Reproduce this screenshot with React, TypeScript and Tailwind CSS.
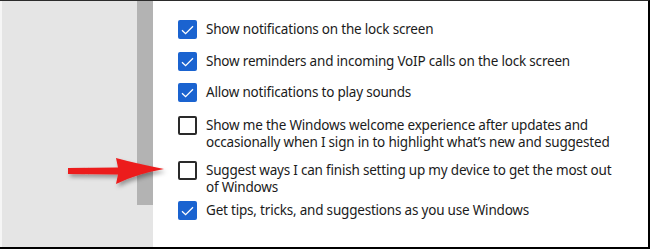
import React from 'react'

type Item = {
  lines: string[]
  checked: boolean
  mt: string
}

const items: Item[] = [
  { lines: ['Show notifications on the lock screen'], checked: true, mt: 'mt-0' },
  {
    lines: ['Show reminders and incoming VoIP calls on the lock screen'],
    checked: true,
    mt: 'mt-[13px]',
  },
  { lines: ['Allow notifications to play sounds'], checked: true, mt: 'mt-[12px]' },
  {
    lines: [
      'Show me the Windows welcome experience after updates and',
      'occasionally when I sign in to highlight what\u2019s new and suggested',
    ],
    checked: false,
    mt: 'mt-[14px]',
  },
  {
    lines: ['Suggest ways I can finish setting up my device to get the most out', 'of Windows'],
    checked: false,
    mt: 'mt-[10px]',
  },
  {
    lines: ['Get tips, tricks, and suggestions as you use Windows'],
    checked: true,
    mt: 'mt-[5px]',
  },
]

function Checkbox({ checked }: { checked: boolean }) {
  if (checked) {
    return (
      <div className="flex h-[19px] w-[19px] shrink-0 items-center justify-center rounded-[2px] bg-[#1a63d0]">
        <svg width="13" height="10" viewBox="0 0 13 10" fill="none">
          <path d="M1 5.2 L4.6 8.6 L12 1.2" stroke="white" strokeWidth="1.3" />
        </svg>
      </div>
    )
  }
  return (
    <div className="h-[19px] w-[19px] shrink-0 rounded-[2px] border-2 border-[#2a2a2a] bg-white" />
  )
}

function Arrow() {
  return (
    <svg
      className="absolute left-[64px] top-[152px]"
      width="110"
      height="38"
      viewBox="0 0 110 38"
    >
      <defs>
        <filter id="sh" x="-10%" y="-20%" width="130%" height="160%">
          <feDropShadow dx="2" dy="3" stdDeviation="2" floodColor="#000" floodOpacity="0.35" />
        </filter>
      </defs>
      <path
        d="M4 15 L54 14.5 L52 5 Q70 10 100 16 Q72 21 52 31 L54 21.5 L4 21 Z"
        fill="#ec1c1c"
        filter="url(#sh)"
      />
    </svg>
  )
}

export default function App() {
  return (
    <div className="relative flex h-[249px] w-[650px] border-t border-b-2 border-r-2 border-t-[#2b2b2b] border-b-black border-r-black bg-white font-['Noto_Sans',sans-serif]">
      <div className="w-[137px] border-l-2 border-l-[#f6f6f6] bg-[#e5e5e5]" />
      <div className="flex w-[16px] flex-col bg-[#e5e5e5]">
        <div className="h-[204px] bg-[#b3b3b3]" />
      </div>
      <div className="flex flex-1 flex-col pl-[25px] pt-[19px]">
        {items.map((item, i) => (
          <div key={i} className={`flex items-start gap-[9px] ${item.mt}`}>
            <Checkbox checked={item.checked} />
            <div className="mt-[1px] text-[13.5px] leading-[17px] tracking-[-0.2px] text-[#1b1b1b]">
              {item.lines.map((line, j) => (
                <div key={j}>{line}</div>
              ))}
            </div>
          </div>
        ))}
      </div>
      <Arrow />
    </div>
  )
}
